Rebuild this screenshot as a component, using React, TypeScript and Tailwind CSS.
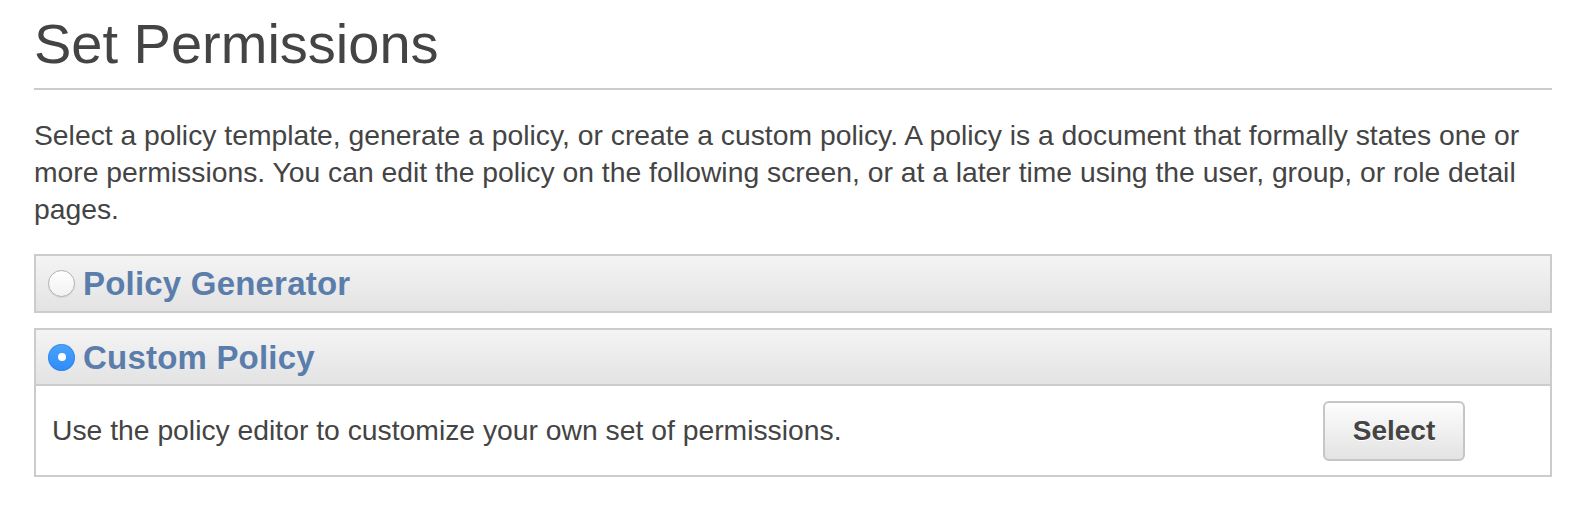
import { useState } from 'react';

const PANELS = [
  { id: 'generator', label: 'Policy Generator', body: null },
  {
    id: 'custom',
    label: 'Custom Policy',
    body: 'Use the policy editor to customize your own set of permissions.',
  },
];

function Radio({ checked }: { checked: boolean }) {
  return checked ? (
    <span className="flex h-[27px] w-[27px] shrink-0 items-center justify-center rounded-full bg-gradient-to-b from-[#4aa3fd] to-[#2f8cf6] shadow-[inset_0_0_0_1px_rgba(30,110,220,0.35)]">
      <span className="h-[8px] w-[8px] rounded-full bg-white" />
    </span>
  ) : (
    <span className="h-[27px] w-[27px] shrink-0 rounded-full border border-[#b0b0b0] bg-gradient-to-b from-white to-[#f2f2f2] shadow-[0_1px_1px_rgba(0,0,0,0.08)]" />
  );
}

export default function App() {
  const [selected, setSelected] = useState('custom');

  return (
    <div className="h-[522px] w-[1588px] bg-white pl-[34px] pr-[36px] font-['Liberation_Sans',Arial,Helvetica,sans-serif] text-[#444444]">
      <h1 className="pt-[16px] text-[56px] leading-[56px] font-normal">Set Permissions</h1>
      <div className="mt-[16px] h-[2px] bg-[#cccccc]" />
      <p className="mt-[27px] text-[28.3px] leading-[37px]">
        Select a policy template, generate a policy, or create a custom policy. A policy is a
        document that formally states one or more permissions. You can edit the policy on the
        following screen, or at a later time using the user, group, or role detail pages.
      </p>

      <div className="mt-[26px] flex flex-col gap-[15px]">
        {PANELS.map((panel) => {
          const open = panel.id === selected;
          return (
            <div key={panel.id} className="border-2 border-[#cccccc]">
              <button
                type="button"
                onClick={() => setSelected(panel.id)}
                className={`flex w-full items-center gap-[8px] bg-gradient-to-b from-[#f4f4f4] to-[#e3e3e3] pl-[12px] text-left ${
                  open ? 'h-[56px] border-b-2 border-[#cccccc]' : 'h-[55px]'
                }`}
              >
                <Radio checked={open} />
                <span className="text-[33px] font-bold leading-none tracking-[0.2px] text-[#5a7dab]">
                  {panel.label}
                </span>
              </button>
              {open && panel.body && (
                <div className="flex h-[89px] items-center justify-between pl-[16px] pr-[85px]">
                  <span className="text-[28.3px] leading-none">{panel.body}</span>
                  <button
                    type="button"
                    className="flex h-[60px] w-[142px] items-center justify-center rounded-[6px] border-2 border-[#c6c6c6] bg-gradient-to-b from-[#fdfdfd] to-[#e3e3e3] text-[28px] font-bold text-[#444444] [text-shadow:0_1px_0_#ffffff]"
                  >
                    Select
                  </button>
                </div>
              )}
            </div>
          );
        })}
      </div>
    </div>
  );
}
